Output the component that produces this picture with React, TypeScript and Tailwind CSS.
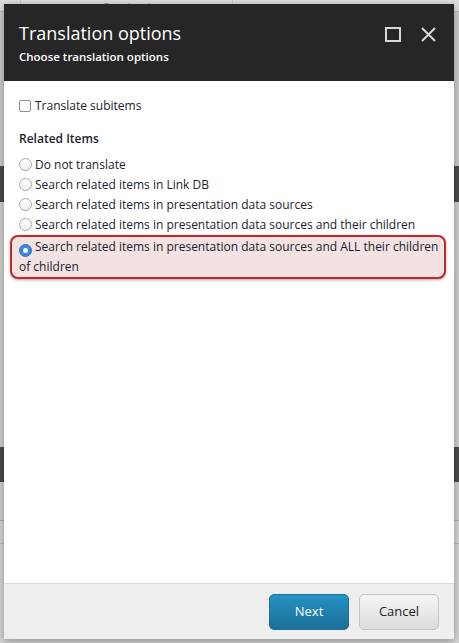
import { useState } from 'react';

const OPTIONS = [
  'Do not translate',
  'Search related items in Link DB',
  'Search related items in presentation data sources',
  'Search related items in presentation data sources and their children',
  'Search related items in presentation data sources and ALL their children of children',
];

function Radio({ checked }: { checked: boolean }) {
  if (checked) {
    return (
      <span className="inline-flex items-center justify-center w-[13px] h-[13px] rounded-full bg-[#3a86e0] border border-[#2f72c4] align-[-2px] mr-[3px]">
        <span className="w-[5px] h-[5px] rounded-full bg-white" />
      </span>
    );
  }
  return (
    <span className="inline-block w-[13px] h-[13px] rounded-full border border-[#a9a9a9] bg-gradient-to-b from-white to-[#f0f0f0] align-[-2px] mr-[3px]" />
  );
}

export default function App() {
  const [selected, setSelected] = useState(4);
  const [subitems, setSubitems] = useState(false);

  return (
    <div
      className="relative w-[459px] h-[643px] overflow-hidden bg-[#cccccc]"
      style={{ fontFamily: '"Open Sans", "Noto Sans", sans-serif' }}
    >
      {/* Page behind the dialog */}
      <div className="flex flex-col h-full">
        <div className="h-[12px] bg-[#dedede] border-b border-[#b9b9b9] flex overflow-hidden">
          <div className="w-[21px] border-r border-[#c8c8c8]" />
          <div className="w-[212px] border-r border-[#c8c8c8] flex justify-center items-end">
            <span className="text-[14px] leading-[14px] text-[#9a9a9a] mb-[-4px]">Context</span>
          </div>
        </div>
        <div className="h-[154px] bg-[#cdcdcd]" />
        <div className="h-[36px] bg-[#4b4b4b]" />
        <div className="h-[245px] bg-[#d0d0d0]" />
        <div className="h-[35px] bg-[#4b4b4b]" />
        <div className="h-[39px] bg-[#d0d0d0] border-b border-[#b0b0b0]" />
        <div className="h-[23px] bg-[#d6d6d6] border-b border-[#b8b8b8]" />
        <div className="flex-1 bg-[#d6d6d6]" />
      </div>

      {/* Dialog */}
      <div className="absolute left-[4px] top-[4px] w-[450px] h-[635px] flex flex-col bg-white shadow-[0_2px_8px_rgba(0,0,0,0.35)]">
        <div className="h-[77px] bg-[#262626] flex items-start justify-between pl-[15px] pr-[18px] pt-[16px]">
          <div>
            <div className="text-[18px] leading-[26px] text-white">Translation options</div>
            <div className="text-[11.5px] leading-[18px] font-semibold text-white mt-[2px]">Choose translation options</div>
          </div>
          <div className="flex items-center gap-[20px] pt-[7px]">
            <svg width="16" height="15" viewBox="0 0 16 15">
              <rect x="1" y="1" width="14" height="13" fill="none" stroke="#d8d8d8" strokeWidth="2" />
            </svg>
            <svg width="15" height="15" viewBox="0 0 15 15">
              <path d="M1 1 L14 14 M14 1 L1 14" stroke="#d8d8d8" strokeWidth="2" />
            </svg>
          </div>
        </div>

        <div className="flex-1 pl-[15px] pr-[8px] pt-[15px] text-[12px] leading-[20px] text-[#1c1c2c]">
          <label className="flex items-center cursor-pointer" onClick={() => setSubitems(!subitems)}>
            <span className="w-[12px] h-[12px] rounded-[2px] border border-[#8f8f8f] bg-white mr-[4px] flex items-center justify-center">
              {subitems && <span className="w-[6px] h-[6px] bg-[#3a86e0]" />}
            </span>
            Translate subitems
          </label>

          <div className="font-semibold mt-[13px] mb-[6px]">Related Items</div>

          <div className="flex flex-col">
            {OPTIONS.map((opt, i) =>
              i === selected ? (
                <div
                  key={opt}
                  className="-ml-[9px] pl-[7px] pr-0 rounded-[8px] border-2 border-[#c0282f] bg-[#f2e2e2] shadow-[0_1px_3px_rgba(0,0,0,0.35)] cursor-pointer"
                  onClick={() => setSelected(i)}
                >
                  <Radio checked />
                  {opt}
                </div>
              ) : (
                <div key={opt} className="cursor-pointer" onClick={() => setSelected(i)}>
                  <Radio checked={false} />
                  {opt}
                </div>
              )
            )}
          </div>
        </div>

        <div className="h-[56px] bg-[#eeeeee] border-t border-[#dadada] flex items-center justify-end gap-[10px] pr-[15px] pt-[1px]">
          <button className="w-[80px] h-[36px] rounded-[5px] border border-[#1d6f97] bg-gradient-to-b from-[#2592c3] to-[#1b6f98] text-white text-[13px]">
            Next
          </button>
          <button className="w-[80px] h-[36px] rounded-[5px] border border-[#c4c4c4] bg-gradient-to-b from-[#f6f6f6] to-[#dcdcdc] text-[#222] text-[13px]">
            Cancel
          </button>
        </div>
      </div>
    </div>
  );
}
